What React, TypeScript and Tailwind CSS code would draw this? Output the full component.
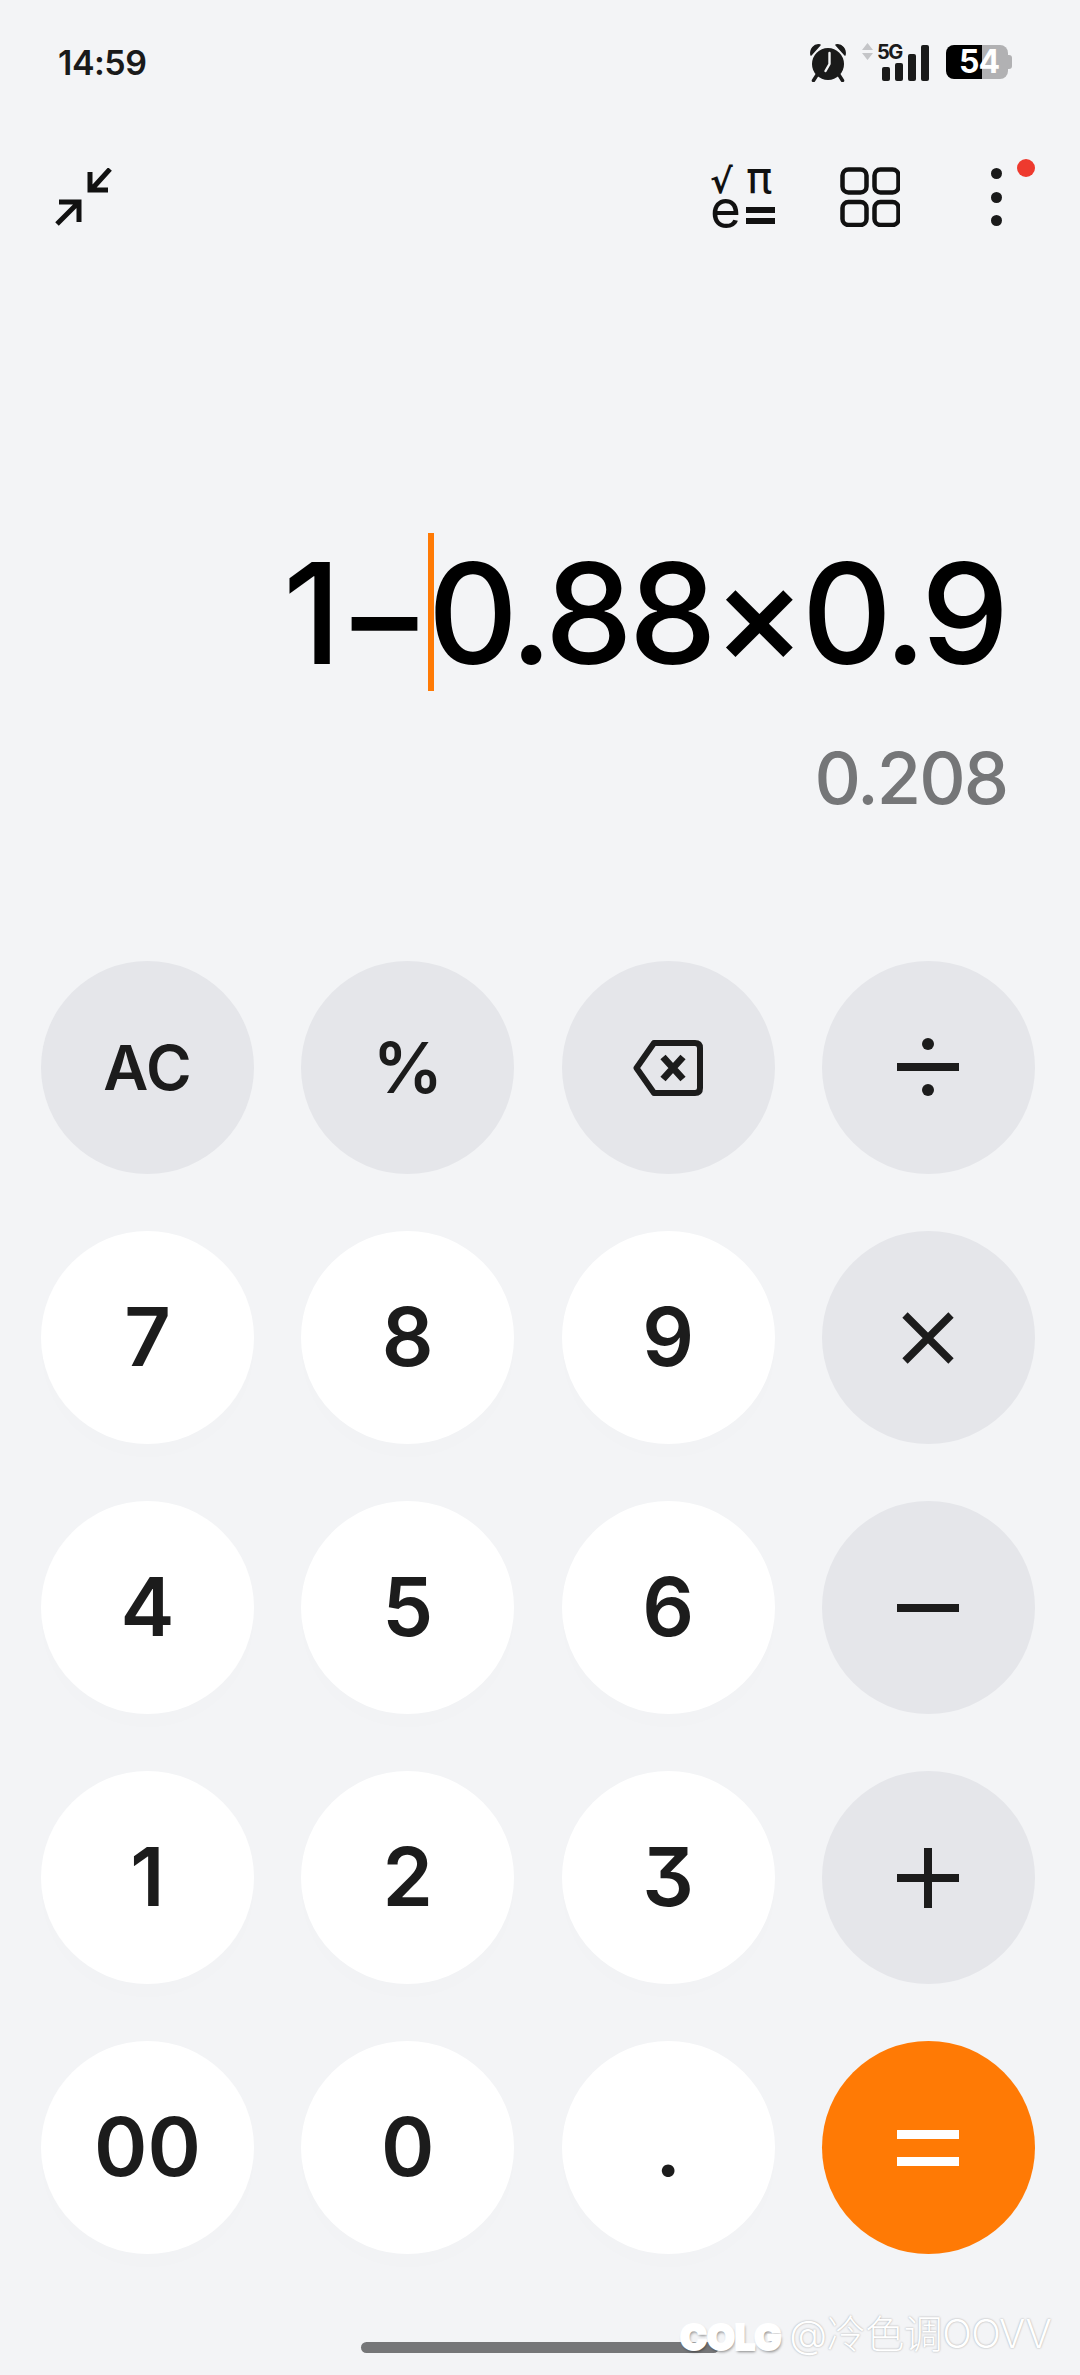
import React from 'react';

const fontStack = "font-['Inter','Noto_Sans_CJK_SC',sans-serif]";

const AlarmIcon = () => (
  <svg width="38" height="40" viewBox="0 0 38 40" className="text-[#1a1a1a]">
    <path d="M2 13 C1 7 5 2 11 3 Z M36 13 C37 7 33 2 27 3 Z" fill="currentColor" stroke="currentColor" strokeWidth="1.5" strokeLinejoin="round" />
    <path d="M8 33 L4.5 38.5 M30 33 L33.5 38.5" stroke="currentColor" strokeWidth="3.5" strokeLinecap="round" />
    <circle cx="19" cy="22" r="16" fill="currentColor" />
    <path d="M20.5 11 L20.5 22 L16.5 29" stroke="#f3f4f6" strokeWidth="2.4" fill="none" strokeLinecap="round" strokeLinejoin="round" />
  </svg>
);

const StatusIcons = () => (
  <div className="flex items-center">
    <AlarmIcon />
    <div className="relative ml-[15px] h-[38px] w-[68px]">
      <svg width="11" height="17" viewBox="0 0 11 17" className="absolute left-0 top-0 text-[#c4c5c8]">
        <path d="M5.5 0 L11 7 L0 7 Z M0 10 L11 10 L5.5 17 Z" fill="currentColor" />
      </svg>
      <span className="absolute left-[15px] top-[-1px] text-[20px] font-bold leading-[20px] tracking-[-1.5px] text-[#1a1a1a]">5G</span>
      <div className="absolute bottom-0 left-[20px] flex items-end gap-[5.5px]">
        <div className="h-[14px] w-[7.5px] rounded-[2px] bg-[#1a1a1a]" />
        <div className="h-[18px] w-[7.5px] rounded-[2px] bg-[#1a1a1a]" />
        <div className="h-[27px] w-[7.5px] rounded-[2px] bg-[#1a1a1a]" />
        <div className="h-[36px] w-[7.5px] rounded-[2px] bg-[#1a1a1a]" />
      </div>
    </div>
    <div className="relative ml-[16px] flex h-[34px] w-[66px] items-center">
      <div className="h-full w-[36px] rounded-l-[8px] bg-black" />
      <div className="h-full w-[26px] rounded-r-[8px] bg-[#b1b1b3]" />
      <div className="h-[14px] w-[4px] rounded-r-[3px] bg-[#b1b1b3]" />
      <span className="absolute left-[13px] top-0 text-[32px] font-bold leading-[34px] tracking-[-1px] text-white">54</span>
    </div>
  </div>
);

const CollapseIcon = () => (
  <svg width="58" height="58" viewBox="0 0 58 58" fill="none" stroke="#111" strokeWidth="5" className="text-black">
    <path d="M55 1 L35.5 22.5 M35 4 L35 22 L53 22" />
    <path d="M2 56 L24 34 M4 34 L24 34 L24 54" />
  </svg>
);

const ScienceIcon = () => (
  <svg width="66" height="90" viewBox="0 0 66 90">
    <text x="-1" y="41" fontSize="34" fontWeight="700" fill="#111" fontFamily="'DejaVu Sans', sans-serif">√</text>
    <text x="35" y="41" fontSize="44" fontWeight="400" fill="#111" fontFamily="'DejaVu Sans', sans-serif">π</text>
    <text x="-1" y="76" fontSize="53" fontWeight="400" fill="#111" fontFamily="Inter, sans-serif">e</text>
    <rect x="35" y="55" width="29" height="6" fill="#111" />
    <rect x="35" y="66" width="29" height="6" fill="#111" />
  </svg>
);

const GridIcon = () => (
  <svg width="60" height="60" viewBox="0 0 60 60" fill="none" stroke="#111" strokeWidth="4.5">
    <rect x="2.5" y="2.5" width="24" height="23" rx="6" />
    <rect x="34.5" y="2.5" width="24" height="23" rx="6" />
    <rect x="2.5" y="35" width="24" height="23" rx="6" />
    <rect x="34.5" y="35" width="24" height="23" rx="6" />
  </svg>
);

const MoreIcon = () => (
  <div className="relative flex h-[58px] w-[12px] flex-col items-center justify-between">
    <div className="h-[11px] w-[11px] rounded-full bg-[#1a1a1a]" />
    <div className="h-[11px] w-[11px] rounded-full bg-[#1a1a1a]" />
    <div className="h-[11px] w-[11px] rounded-full bg-[#1a1a1a]" />
    <div className="absolute left-[27px] top-[-9px] h-[18px] w-[18px] rounded-full bg-[#ee3a2e]" />
  </div>
);

const BackspaceIcon = () => (
  <svg width="70" height="56" viewBox="0 0 70 56" fill="none" stroke="#1c1c1c" strokeWidth="6" strokeLinejoin="round">
    <path d="M21 3 L62 3 Q67 3 67 8 L67 48 Q67 53 62 53 L21 53 L3.5 28 Z" />
    <path d="M30 17 L50 39 M50 17 L30 39" strokeWidth="7" />
  </svg>
);

const DivideIcon = () => (
  <svg width="62" height="58" viewBox="0 0 62 58" fill="#1c1c1c" className="-translate-y-px">
    <circle cx="31" cy="6" r="6" />
    <rect x="0" y="25" width="62" height="8" />
    <circle cx="31" cy="52" r="6" />
  </svg>
);

const TimesIcon = () => (
  <svg width="52" height="52" viewBox="0 0 52 52" stroke="#1c1c1c" strokeWidth="7.5">
    <path d="M3 3 L49 49 M49 3 L3 49" />
  </svg>
);

const MinusIcon = () => (
  <svg width="62" height="8" viewBox="0 0 62 8" fill="#1c1c1c">
    <rect width="62" height="8" />
  </svg>
);

const PlusIcon = () => (
  <svg width="62" height="60" viewBox="0 0 62 60" fill="#1c1c1c">
    <rect x="0" y="26" width="62" height="8" />
    <rect x="27" y="0" width="8" height="60" />
  </svg>
);

const EqualsIcon = () => (
  <svg width="62" height="36" viewBox="0 0 62 36" fill="#ffffff">
    <rect width="62" height="9" />
    <rect y="27" width="62" height="9" />
  </svg>
);

type KeyKind = 'num' | 'op' | 'eq';

interface KeyDef {
  label: React.ReactNode;
  kind: KeyKind;
}

const keys: KeyDef[] = [
  { label: 'AC', kind: 'op' },
  { label: '%', kind: 'op' },
  { label: <BackspaceIcon />, kind: 'op' },
  { label: <DivideIcon />, kind: 'op' },
  { label: '7', kind: 'num' },
  { label: '8', kind: 'num' },
  { label: '9', kind: 'num' },
  { label: <TimesIcon />, kind: 'op' },
  { label: '4', kind: 'num' },
  { label: '5', kind: 'num' },
  { label: '6', kind: 'num' },
  { label: <MinusIcon />, kind: 'op' },
  { label: '1', kind: 'num' },
  { label: '2', kind: 'num' },
  { label: '3', kind: 'num' },
  { label: <PlusIcon />, kind: 'op' },
  { label: '00', kind: 'num' },
  { label: '0', kind: 'num' },
  { label: '.', kind: 'num' },
  { label: <EqualsIcon />, kind: 'eq' },
];

const Key: React.FC<KeyDef> = ({ label, kind }) => {
  const tone =
    kind === 'num'
      ? 'bg-white shadow-[0_14px_30px_rgba(0,0,0,0.008)]'
      : kind === 'op'
        ? 'bg-[#e5e6ea]'
        : 'bg-[#ff7a05]';
  const textSize = label === 'AC' ? 'text-[62px]' : label === '%' ? 'text-[70px]' : 'text-[81px]';

  return (
    <button className={`flex h-[213px] w-[213px] items-center justify-center rounded-full ${tone}`}>
      <span className={`${textSize} font-semibold leading-none text-[#1c1c1c] [font-feature-settings:'cv09']`}>{label}</span>
    </button>
  );
};

export default function App() {
  return (
    <div className={`relative h-[2375px] w-[1080px] overflow-hidden bg-[#f3f4f6] ${fontStack}`}>
      {/* Status bar */}
      <div className="flex h-[124px] items-center justify-between pl-[58px] pr-[68px]">
        <span className="text-[34px] font-semibold tracking-[-0.5px] text-[#1a1a1a]">14:59</span>
        <StatusIcons />
      </div>

      {/* Toolbar */}
      <div className="flex h-[146px] items-center pl-[55px]">
        <CollapseIcon />
        <div className="ml-auto flex items-center">
          <ScienceIcon />
          <div className="ml-[63px]">
            <GridIcon />
          </div>
          <div className="ml-[90px] mr-[78px]">
            <MoreIcon />
          </div>
        </div>
      </div>

      {/* Display */}
      <div className="pr-[75px] text-right">
        <div className="mt-[264px] text-[140px] font-medium leading-[158px] tracking-[-3.5px] text-black">
          1−
          <span className="relative tracking-[-4.25px]">
            <span className="absolute left-0 top-[5px] h-[158px] w-[6px] bg-[#ff7a05]" />
            0.88×0.9
          </span>
        </div>
        <div className="-mr-[2px] mt-[36px] text-[72px] font-medium leading-[100px] tracking-[-2px] text-[#757678]">0.208</div>
      </div>

      {/* Keypad */}
      <div className="mt-[133px] grid grid-cols-[repeat(4,213px)] gap-x-[47.3px] gap-y-[57px] pl-[41px]">
        {keys.map((k, i) => (
          <Key key={i} label={k.label} kind={k.kind} />
        ))}
      </div>

      {/* Home indicator */}
      <div className="mx-auto mt-[88px] h-[11px] w-[358px] rounded-full bg-[#757678]" />

      {/* Watermark */}
      <div className="absolute left-[680px] top-[2306px] flex items-center gap-[8px] text-white">
        <span className="mt-[6px] text-[36px] font-black leading-[50px] tracking-[0px] [-webkit-text-stroke:2px_#fff] [text-shadow:1px_2px_3px_rgba(0,0,0,0.45)]">COLG</span>
        <span className="text-[39px] font-light leading-[50px] tracking-[-0.5px] [text-shadow:0_0_2px_rgba(0,0,0,0.35)]">@冷色调OOVV</span>
      </div>
    </div>
  );
}
